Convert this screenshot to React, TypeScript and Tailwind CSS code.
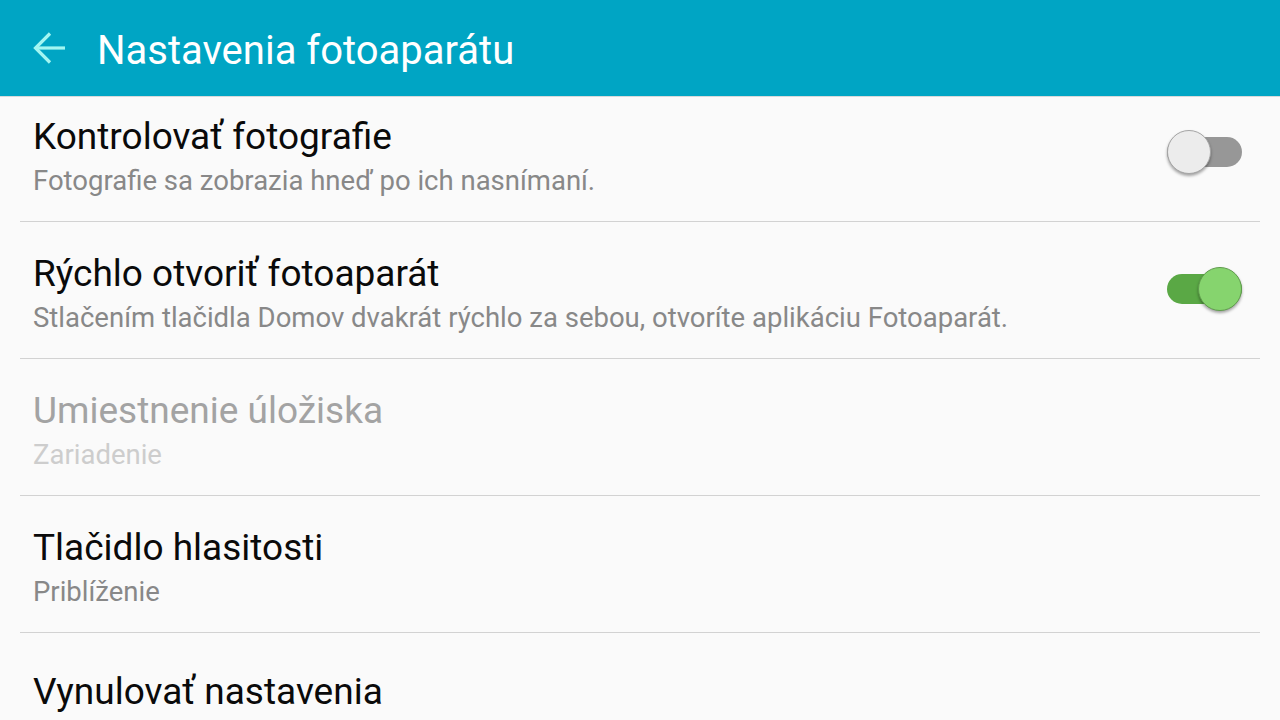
import React from "react";

type Row = {
  title: string;
  subtitle?: string;
  disabled?: boolean;
  toggle?: "on" | "off";
};

const rows: Row[] = [
  { title: "Kontrolovať fotografie", subtitle: "Fotografie sa zobrazia hneď po ich nasnímaní.", toggle: "off" },
  {
    title: "Rýchlo otvoriť fotoaparát",
    subtitle: "Stlačením tlačidla Domov dvakrát rýchlo za sebou, otvoríte aplikáciu Fotoaparát.",
    toggle: "on",
  },
  { title: "Umiestnenie úložiska", subtitle: "Zariadenie", disabled: true },
  { title: "Tlačidlo hlasitosti", subtitle: "Priblíženie" },
  { title: "Vynulovať nastavenia" },
];

function Toggle({ on }: { on: boolean }) {
  return (
    <div className="relative w-[75px] h-[46px] flex items-center shrink-0">
      <div className={`w-[75px] h-[30px] rounded-full ${on ? "bg-[#5aa845]" : "bg-[#979797]"}`} />
      {on ? (
        <div className="absolute right-0 top-[1px] w-[44px] h-[44px] rounded-full bg-[#86d46e] border border-[#5f9c4c] shadow-[0_2px_3px_rgba(0,0,0,0.35)]" />
      ) : (
        <div className="absolute left-0 top-[1px] w-[44px] h-[44px] rounded-full bg-[#ececec] border border-[#a5a5a5] shadow-[0_2px_3px_rgba(0,0,0,0.35)]" />
      )}
    </div>
  );
}

export default function App() {
  return (
    <div className="w-[1280px] h-[720px] overflow-hidden bg-[#fafafa] flex flex-col" style={{ fontFamily: "Roboto, 'Noto Sans', sans-serif" }}>
      <header className="h-[97px] shrink-0 bg-[#00a5c4] border-b border-[#d6dadb] flex items-center">
        <div className="w-[97px] flex justify-center pl-[1px]">
          <svg width="32" height="32" viewBox="0 0 32 32" fill="none" stroke="#a3f6f2" strokeWidth="3.2">
            <path d="M2 16H32" />
            <path d="M17 1.5 2.5 16 17 30.5" />
          </svg>
        </div>
        <h1 className="text-white text-[40px] leading-[48px] pt-[5px] font-normal">Nastavenia fotoaparátu</h1>
      </header>
      <div className="flex-1 overflow-hidden">
        <div className="-mt-[12px] flex flex-col">
          {rows.map((r, i) => (
            <div key={i} className="h-[137px] mx-[20px] border-b border-[#d2d2d2] flex items-start justify-between pl-[13px] pr-[18px] shrink-0">
              <div className={`${r.subtitle ? "pt-[32px]" : "pt-[39px]"} flex flex-col`}>
                <div className={`text-[37px] leading-[40px] ${r.disabled ? "text-[#a3a3a3]" : "text-[#0a0a0a]"}`}>
                  {r.title}
                </div>
                {r.subtitle && (
                  <div className={`mt-[9px] text-[27.5px] leading-[30px] ${r.disabled ? "text-[#cdcdcd]" : "text-[#888888]"}`}>
                    {r.subtitle}
                  </div>
                )}
              </div>
              {r.toggle && (
                <div className="pt-[44px]">
                  <Toggle on={r.toggle === "on"} />
                </div>
              )}
            </div>
          ))}
        </div>
      </div>
    </div>
  );
}
